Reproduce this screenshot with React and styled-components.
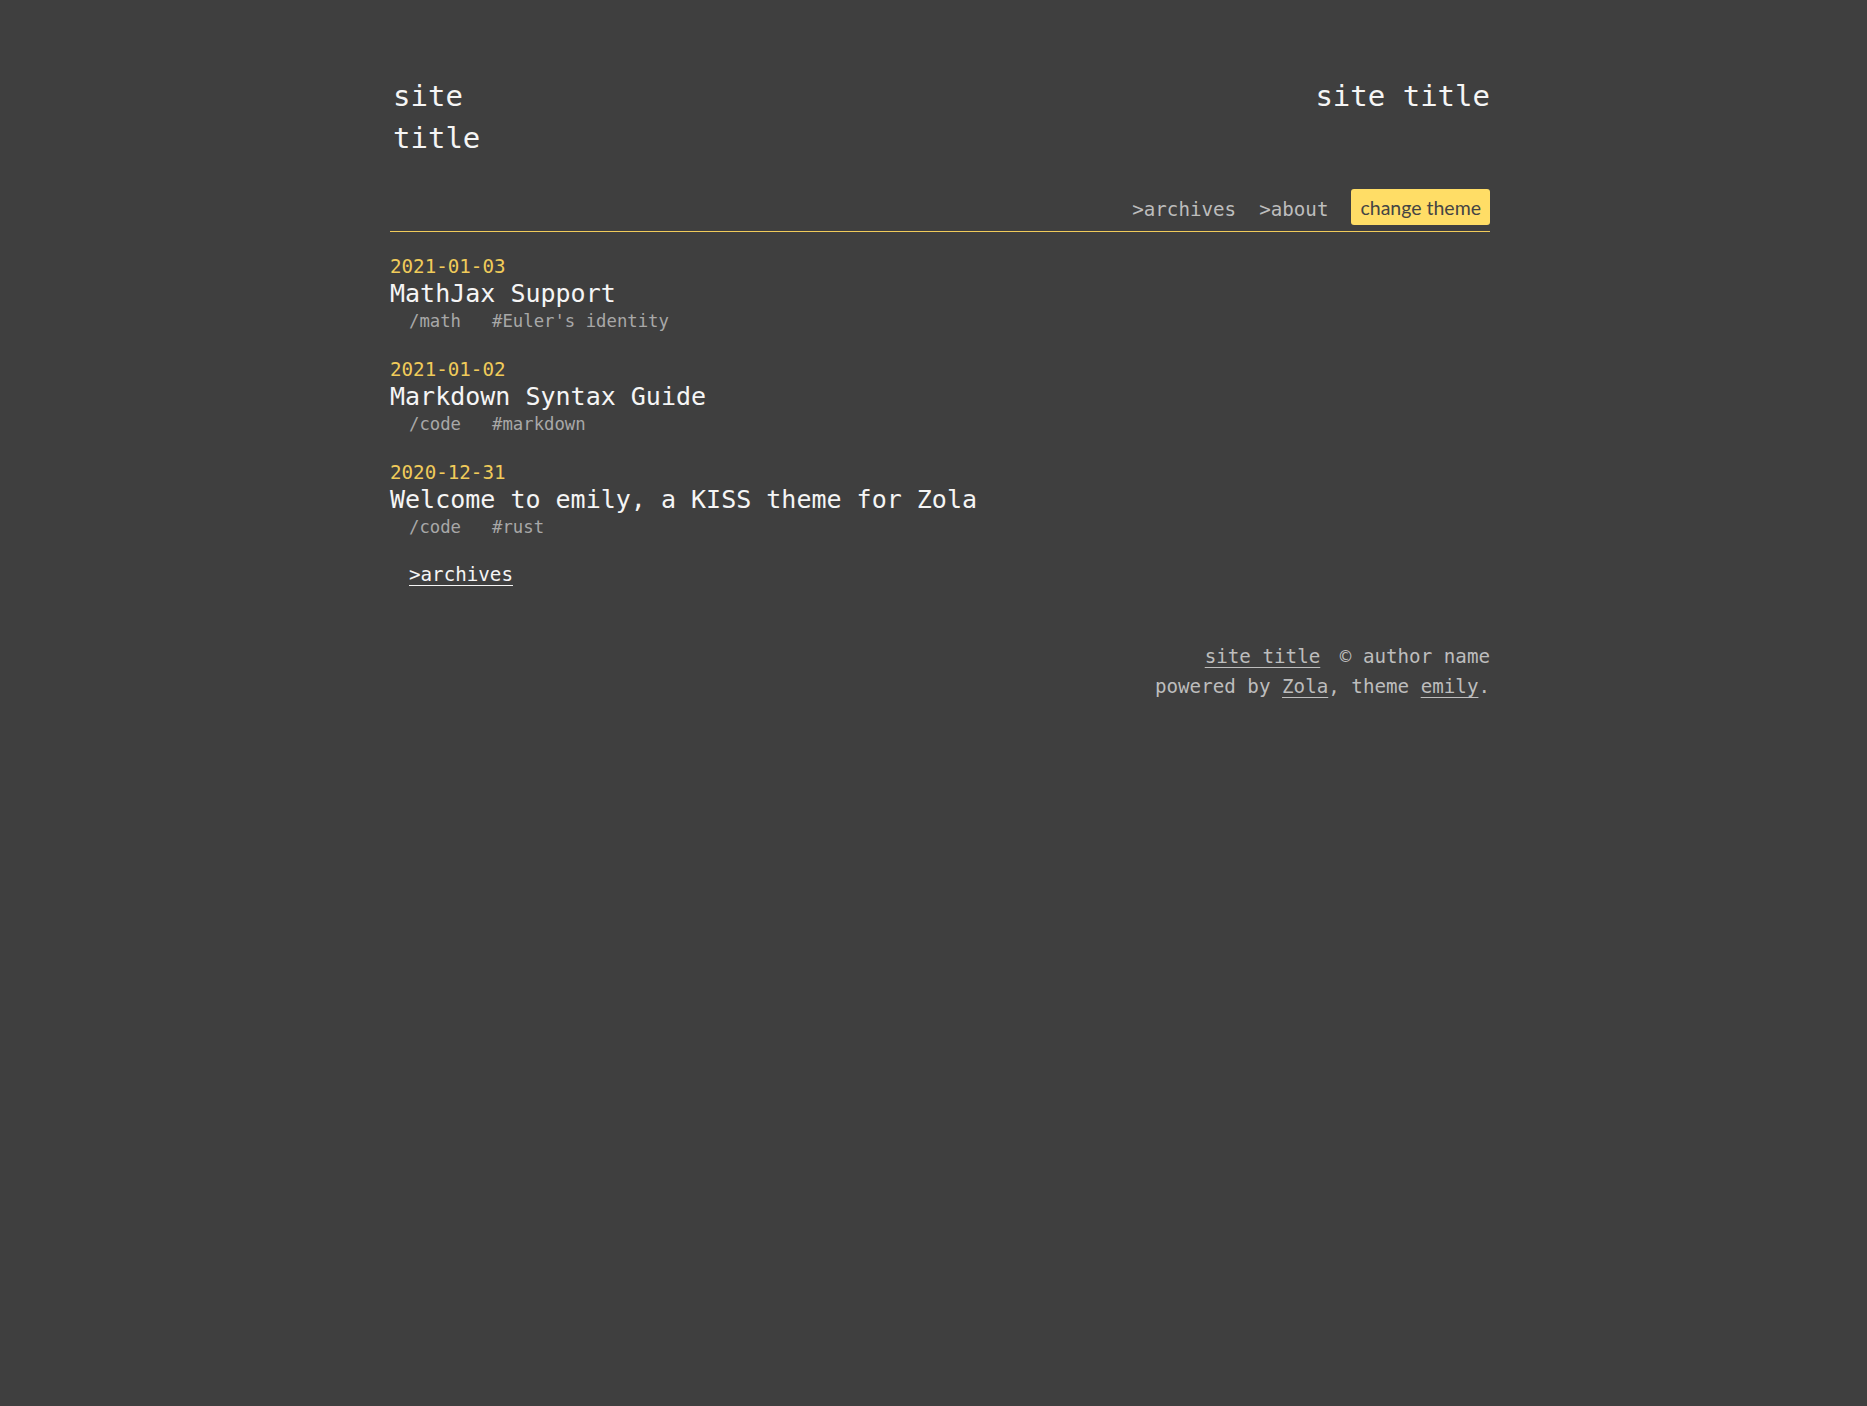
import React from 'react';
import styled, { createGlobalStyle } from 'styled-components';

const GlobalStyle = createGlobalStyle`
  html, body {
    margin: 0;
    padding: 0;
    background-color: #3f3f3f;
  }
  body {
    font-family: "DejaVu Sans Mono", "Liberation Mono", monospace;
    color: #f2f2f2;
  }
`;

const Page = styled.div`
  width: 1113px;
  margin: 0 auto;
  padding: 75px 0 0 13px;
  box-sizing: border-box;
`;

const Header = styled.header`
  display: flex;
  justify-content: space-between;
  align-items: flex-start;
`;

const SiteTitle = styled.a`
  display: block;
  font-size: 29px;
  line-height: 42px;
  color: #f5f5f5;
  text-decoration: none;
  width: ${(p) => (p.$narrow ? '90px' : 'auto')};
  margin-left: ${(p) => (p.$narrow ? '3px' : '0')};
`;

const Nav = styled.nav`
  display: flex;
  justify-content: flex-end;
  align-items: center;
  gap: 23px;
  margin-top: 30px;
  padding-bottom: 6px;
  border-bottom: 1px solid #f0cb5a;
`;

const NavLink = styled.a`
  font-size: 19.2px;
  line-height: 30px;
  padding-top: 6px;
  color: #bdbdbd;
  text-decoration: none;
`;

const ThemeButton = styled.button`
  font-family: Lato, "Noto Sans", sans-serif;
  font-size: 19.5px;
  height: 36px;
  padding: 0 9px;
  border: none;
  border-radius: 3px;
  background-color: #ffdd66;
  color: #444444;
  cursor: pointer;
`;

const Posts = styled.main`
  padding-top: 22px;
`;

const Post = styled.article`
  margin-bottom: 22px;
`;

const PostDate = styled.div`
  font-size: 19.2px;
  line-height: 26px;
  color: #f0cb5a;
`;

const PostTitle = styled.a`
  display: block;
  margin-top: 1px;
  font-size: 25px;
  line-height: 26px;
  color: #f5f5f5;
  text-decoration: none;
`;

const Meta = styled.div`
  font-size: 17.3px;
  line-height: 28px;
  padding-left: 19px;
  color: #a8a8a8;
`;

const Category = styled.a`
  color: inherit;
  text-decoration: none;
  margin-right: 31px;
`;

const Tag = styled.a`
  color: inherit;
  text-decoration: none;
`;

const MoreLink = styled.a`
  display: block;
  width: fit-content;
  margin: -2px 0 0 19px;
  font-size: 19.2px;
  line-height: 28px;
  color: #f5f5f5;
  text-decoration: underline;
  text-underline-offset: 4px;
`;

const Footer = styled.footer`
  margin-top: 53px;
  text-align: right;
  font-size: 19.2px;
  line-height: 29.5px;
  color: #bdbdbd;
`;

const FooterLink = styled.a`
  color: #bdbdbd;
  text-decoration: underline;
  text-underline-offset: 4px;
`;

const Copy = styled.span`
  margin-left: 8px;
`;

const posts = [
  { date: '2021-01-03', title: 'MathJax Support', category: 'math', tag: "Euler's identity" },
  { date: '2021-01-02', title: 'Markdown Syntax Guide', category: 'code', tag: 'markdown' },
  { date: '2020-12-31', title: 'Welcome to emily, a KISS theme for Zola', category: 'code', tag: 'rust' },
];

const App = () => {
  return (
    <>
      <GlobalStyle />
      <Page>
        <Header>
          <SiteTitle href="#" $narrow>site title</SiteTitle>
          <SiteTitle href="#">site title</SiteTitle>
        </Header>

        <Nav>
          <NavLink href="#">&gt;archives</NavLink>
          <NavLink href="#">&gt;about</NavLink>
          <ThemeButton>change theme</ThemeButton>
        </Nav>

        <Posts>
          {posts.map((post) => (
            <Post key={post.date}>
              <PostDate>{post.date}</PostDate>
              <PostTitle href="#">{post.title}</PostTitle>
              <Meta>
                <Category href="#">/{post.category}</Category>
                <Tag href="#">#{post.tag}</Tag>
              </Meta>
            </Post>
          ))}
          <MoreLink href="#">&gt;archives</MoreLink>
        </Posts>

        <Footer>
          <div>
            <FooterLink href="#">site title</FooterLink>{' '}
            <Copy>© author name</Copy>
          </div>
          <div>
            powered by <FooterLink href="#">Zola</FooterLink>, theme <FooterLink href="#">emily</FooterLink>.
          </div>
        </Footer>
      </Page>
    </>
  );
};

export default App;
